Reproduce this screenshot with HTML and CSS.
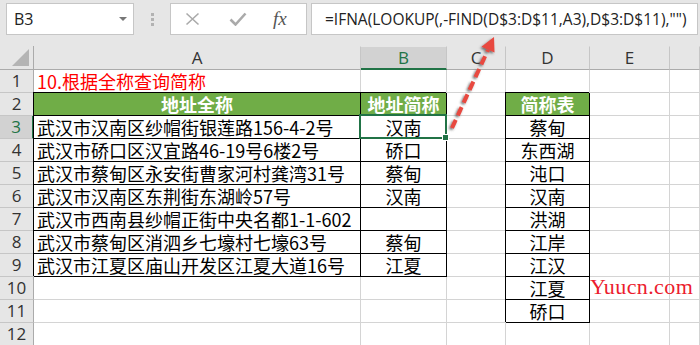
FILE: index.html
```
<!DOCTYPE html>
<html lang="zh">
<head>
    <meta charset="UTF-8">
    <title>根据全称查询简称</title>
    <link rel="stylesheet" href="styles.css">
</head>
<body>
    <div class="toolbar">
        <div class="namebox">
            <span>B3</span>
            <svg class="caret" width="8" height="5" viewBox="0 0 8 5"><path d="M0 0h8L4 4z" fill="#777"/></svg>
        </div>
        <div class="grip"><i></i><i></i><i></i></div>
        <div class="fnbox">
            <svg width="16" height="14" viewBox="0 0 16 14"><path d="M1.5 1.5l12 11M13.5 1.5l-12 11" stroke="#aaa" stroke-width="1.6" fill="none"/></svg>
            <svg width="18" height="14" viewBox="0 0 18 14"><path d="M1.5 7.5l5 5 10-11" stroke="#aaa" stroke-width="2.6" fill="none"/></svg>
            <i class="fx">fx</i>
        </div>
        <div class="formula">=IFNA(LOOKUP(,-FIND(D$3:D$11,A3),D$3:D$11),"")</div>
    </div>

    <div class="sheet">
        <div class="corner"><svg width="18" height="17" viewBox="0 0 18 17"><path d="M17 0V17H0z" fill="#b4b4b4"/></svg></div>
        <div class="colhd">A</div>
        <div class="colhd sel">B</div>
        <div class="colhd">C</div>
        <div class="colhd">D</div>
        <div class="colhd">E</div>
        <div class="colhd"></div>

        <div class="rowhd">1</div>
        <div class="cell title">10.根据全称查询简称</div>
        <div class="cell"></div><div class="cell"></div><div class="cell"></div><div class="cell"></div><div class="cell"></div>

        <div class="rowhd">2</div>
        <div class="cell b head">地址全称</div>
        <div class="cell b head">地址简称</div>
        <div class="cell"></div>
        <div class="cell b head">简称表</div>
        <div class="cell"></div><div class="cell"></div>

        <div class="rowhd sel">3</div>
        <div class="cell b">武汉市汉南区纱帽街银莲路156-4-2号</div>
        <div class="cell b mid active">汉南</div>
        <div class="cell"></div>
        <div class="cell b mid">蔡甸</div>
        <div class="cell"></div><div class="cell"></div>

        <div class="rowhd">4</div>
        <div class="cell b">武汉市硚口区汉宜路46-19号6楼2号</div>
        <div class="cell b mid">硚口</div>
        <div class="cell"></div>
        <div class="cell b mid">东西湖</div>
        <div class="cell"></div><div class="cell"></div>

        <div class="rowhd">5</div>
        <div class="cell b">武汉市蔡甸区永安街曹家河村龚湾31号</div>
        <div class="cell b mid">蔡甸</div>
        <div class="cell"></div>
        <div class="cell b mid">沌口</div>
        <div class="cell"></div><div class="cell"></div>

        <div class="rowhd">6</div>
        <div class="cell b">武汉市汉南区东荆街东湖岭57号</div>
        <div class="cell b mid">汉南</div>
        <div class="cell"></div>
        <div class="cell b mid">汉南</div>
        <div class="cell"></div><div class="cell"></div>

        <div class="rowhd">7</div>
        <div class="cell b">武汉市西南县纱帽正街中央名都1-1-602</div>
        <div class="cell b mid"></div>
        <div class="cell"></div>
        <div class="cell b mid">洪湖</div>
        <div class="cell"></div><div class="cell"></div>

        <div class="rowhd">8</div>
        <div class="cell b">武汉市蔡甸区消泗乡七壕村七壕63号</div>
        <div class="cell b mid">蔡甸</div>
        <div class="cell"></div>
        <div class="cell b mid">江岸</div>
        <div class="cell"></div><div class="cell"></div>

        <div class="rowhd">9</div>
        <div class="cell b">武汉市江夏区庙山开发区江夏大道16号</div>
        <div class="cell b mid">江夏</div>
        <div class="cell"></div>
        <div class="cell b mid">江汉</div>
        <div class="cell"></div><div class="cell"></div>

        <div class="rowhd">10</div>
        <div class="cell"></div><div class="cell"></div><div class="cell"></div>
        <div class="cell b mid">江夏</div>
        <div class="cell"><span class="mark">Yuucn.com</span></div>
        <div class="cell"></div>

        <div class="rowhd">11</div>
        <div class="cell"></div><div class="cell"></div><div class="cell"></div>
        <div class="cell b mid">硚口</div>
        <div class="cell"></div><div class="cell"></div>

        <div class="rowhd">12</div>
        <div class="cell"></div><div class="cell"></div><div class="cell"></div><div class="cell"></div><div class="cell"></div><div class="cell"></div>
    </div>

    <!-- arrow pointing from the selected cell up to the formula -->
    <svg class="arrow" width="700" height="345" viewBox="0 0 700 345">
        <defs>
            <filter id="shade" x="-50%" y="-50%" width="200%" height="200%">
                <feDropShadow dx="-1.5" dy="1.5" stdDeviation="1.2" flood-color="#444" flood-opacity="0.75"/>
            </filter>
        </defs>
        <g filter="url(#shade)">
            <line x1="452" y1="128" x2="488" y2="50" stroke="#e8483f" stroke-width="4" stroke-dasharray="9 5"/>
            <path d="M494 37L494.5 52.5L481.5 46.8z" fill="#e8483f"/>
        </g>
    </svg>
</body>
</html>
```

FILE: styles.css
```
body {
    margin: 0;
    background: #fff;
    font-family: "Noto Sans CJK SC", sans-serif;
    width: 700px;
    height: 345px;
    overflow: hidden;
    position: relative;
}
.toolbar {
    height: 46px;
    background: #e6e6e6;
    display: flex;
    align-items: flex-start;
    padding: 3px 0 0 6px;
    box-sizing: border-box;
}
.namebox {
    width: 128px;
    height: 32px;
    box-sizing: border-box;
    background: #fff;
    border: 1px solid #c6c6c6;
    display: flex;
    align-items: center;
    justify-content: space-between;
    padding: 0 6px 0 7px;
    font-family: "Open Sans", sans-serif;
    font-size: 16px;
    color: #222;
}
.grip {
    width: 36px;
    height: 32px;
    display: flex;
    flex-direction: column;
    align-items: center;
    justify-content: center;
    gap: 2px;
}
.grip i {
    width: 3px;
    height: 3px;
    background: #b2b2b2;
}
.fnbox {
    width: 137px;
    height: 32px;
    box-sizing: border-box;
    background: #fff;
    border: 1px solid #c6c6c6;
    display: flex;
    align-items: center;
    gap: 28px;
    padding-left: 14px;
}
.fx {
    font-family: "Liberation Serif", serif;
    font-size: 19px;
    color: #555;
    margin-left: -2px;
}
.formula {
    margin-left: 4px;
    width: 387px;
    height: 32px;
    box-sizing: border-box;
    background: #fff;
    border: 1px solid #c6c6c6;
    padding-left: 13px;
    font-family: "Open Sans", sans-serif;
    font-size: 15.5px;
    line-height: 30px;
    color: #222;
    white-space: nowrap;
    overflow: hidden;
}
.sheet {
    display: grid;
    grid-template-columns: 34px 327px 86px 59px 84px 80px 1fr;
    grid-template-rows: 24px repeat(12, 23px);
}
.sheet > div {
    box-sizing: border-box;
}
.corner, .colhd, .rowhd {
    background: #e6e6e6;
    color: #333;
    font-family: "Open Sans", sans-serif;
    font-size: 17px;
    text-align: center;
}
.corner {
    border-right: 1px solid #ababab;
    border-bottom: 1px solid #ababab;
    display: flex;
    align-items: flex-end;
    justify-content: flex-end;
    padding: 0 3px 3px 0;
}
.colhd {
    border-right: 1px solid #c6c6c6;
    border-bottom: 1px solid #ababab;
    border-top: 1px solid #e6e6e6;
    line-height: 22px;
}
.colhd.sel {
    background: #d2d2d2;
    color: #217346;
    border-bottom: 2px solid #217346;
}
.rowhd {
    border-right: 1px solid #ababab;
    border-bottom: 1px solid #c6c6c6;
    line-height: 22px;
}
.rowhd.sel {
    background: #d2d2d2;
    color: #217346;
    border-right: 2px solid #217346;
}
.cell {
    border-right: 1px solid #d4d4d4;
    border-bottom: 1px solid #d4d4d4;
    font-size: 18px;
    line-height: 22px;
    padding-left: 3px;
    white-space: nowrap;
    color: #000;
}
.cell.b {
    border-right-color: #000;
    border-bottom-color: #000;
    box-shadow: -1px -1px 0 #000;
}
.cell.mid {
    text-align: center;
    padding-left: 0;
}
.cell.head {
    background: #70ad47;
    color: #fff;
    font-weight: bold;
    text-align: center;
    padding-left: 0;
}
.cell.title {
    color: #ff0000;
}
.cell.active {
    position: relative;
}
.cell.active::after {
    content: "";
    position: absolute;
    left: -2px;
    top: -2px;
    right: -1px;
    bottom: -1px;
    border: 2px solid #217346;
    z-index: 1;
}
.cell.active::before {
    content: "";
    position: absolute;
    right: -3px;
    bottom: -3px;
    width: 5px;
    height: 5px;
    background: #217346;
    border: 1px solid #fff;
    z-index: 2;
}
.mark {
    font-family: "Liberation Serif", "DejaVu Serif", serif;
    font-size: 22px;
    letter-spacing: 0.4px;
    margin-left: -3px;
    color: #ec1c2e;
    position: relative;
    top: -2px;
}
.arrow {
    position: absolute;
    left: 0;
    top: 0;
    pointer-events: none;
}
```
